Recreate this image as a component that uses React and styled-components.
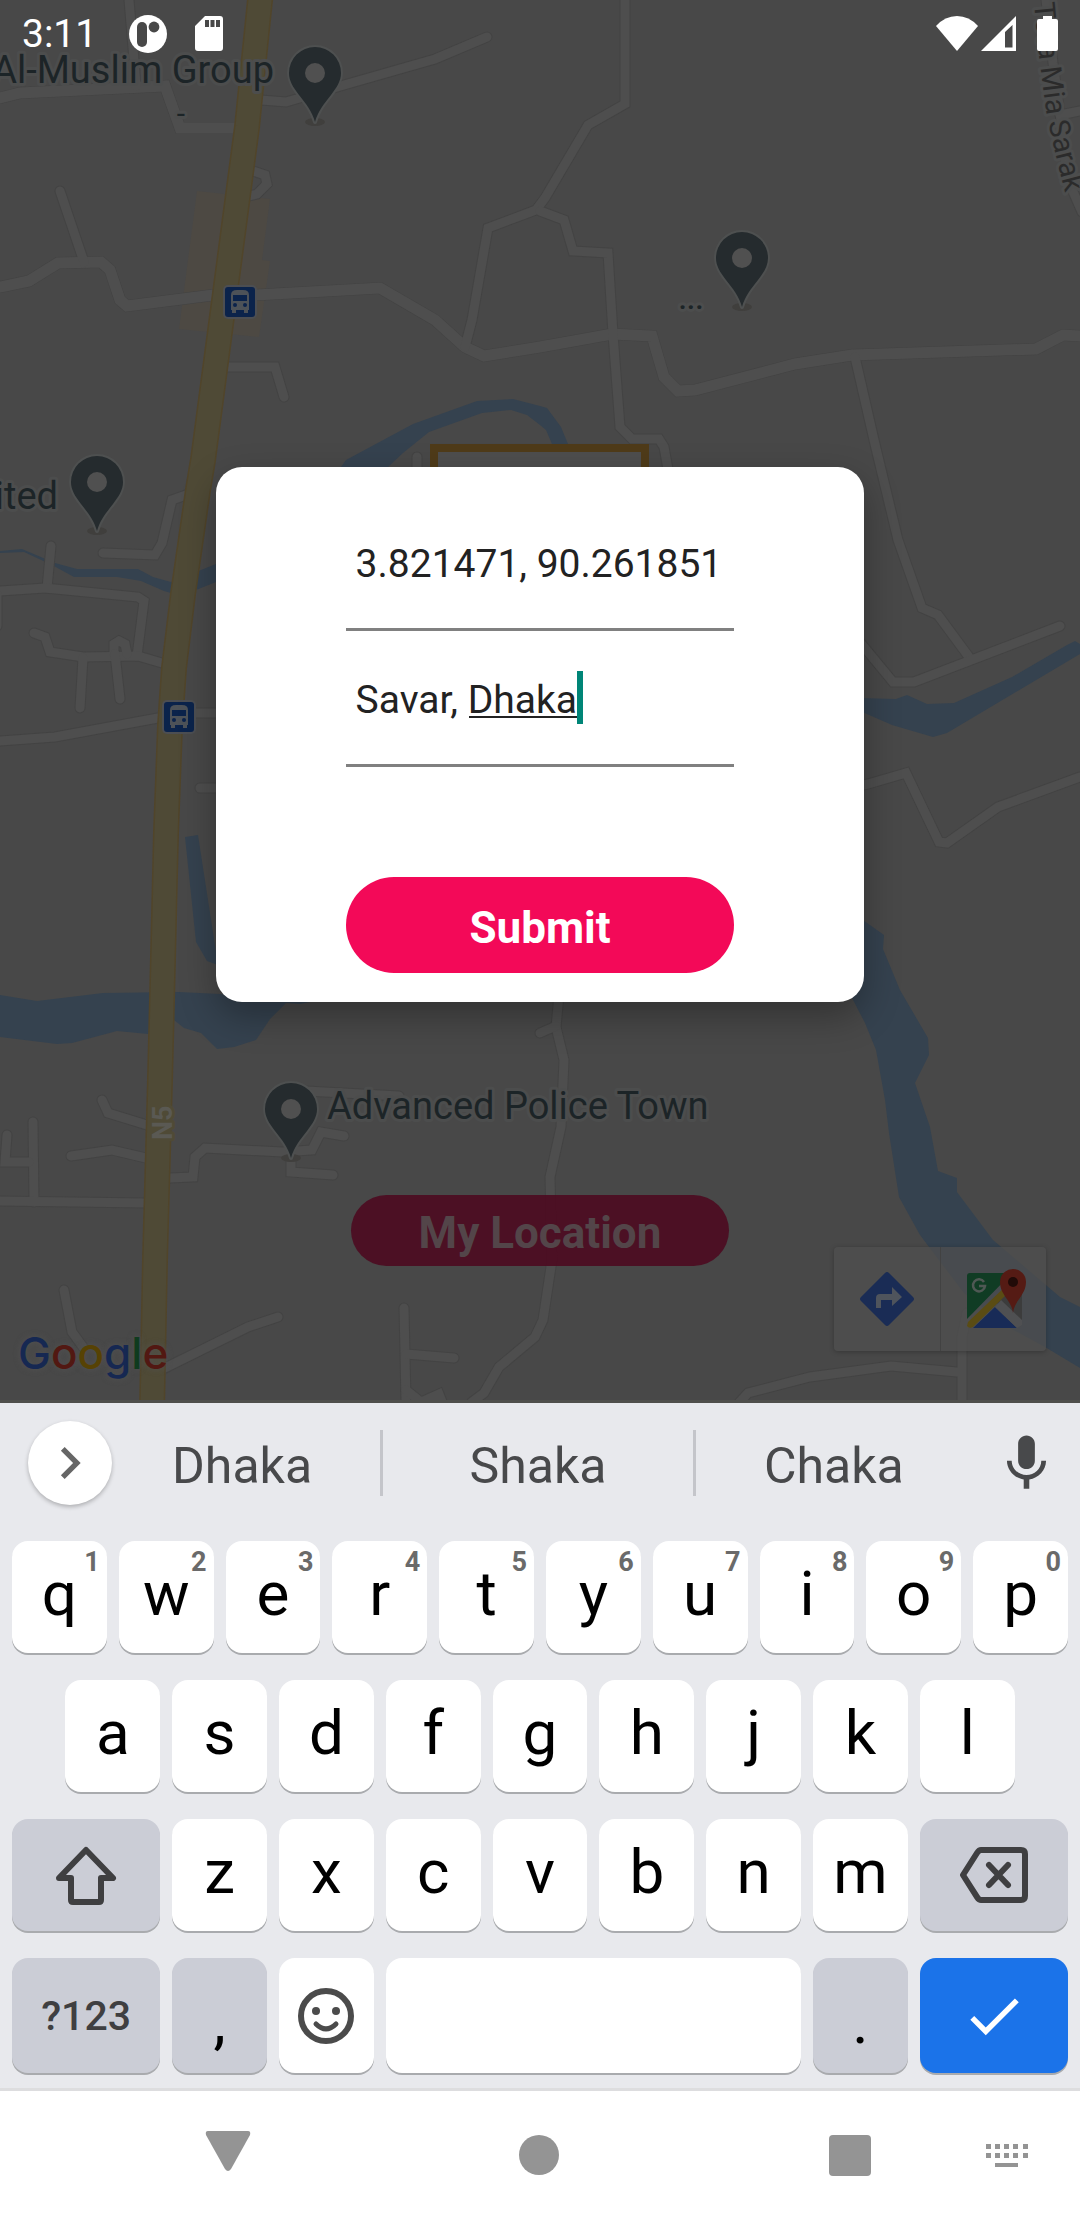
import React, { useId, useState } from "react";
import styled, { createGlobalStyle } from "styled-components";

const Global = createGlobalStyle`
  *, *::before, *::after { box-sizing: border-box; }
  body { margin: 0; background: #fff; font-family: Roboto, "Noto Sans", sans-serif; }
  button, input { font: inherit; color: inherit; border: 0; padding: 0; margin: 0; background: none; }
  button { cursor: pointer; }
  svg { display: block; }
`;

const Screen = styled.div`
  display: flex;
  flex-direction: column;
  min-height: 100vh;
`;

const MapArea = styled.main`
  position: relative;
  flex: 1;
  display: flex;
  flex-direction: column;
  overflow: hidden;
  background: #484848;
  border-bottom: 3px solid #4f4f4c;
`;

const MapCanvas = styled.svg`
  position: absolute;
  top: 0;
  left: 0;
  width: 100%;
  height: 100%;
`;

const StatusBar = styled.header`
  position: relative;
  display: flex;
  align-items: center;
  justify-content: space-between;
  height: 69px;
  padding: 0 22px 2px;
  color: #fff;
`;

const StatusGroup = styled.div`
  display: flex;
  align-items: center;
  gap: ${(p) => p.$gap}px;
`;

const Clock = styled.time`
  font-size: 39px;
  line-height: 44px;
  margin-right: 4px;
`;

const ModalArea = styled.div`
  position: relative;
  flex: 1;
  display: flex;
  align-items: center;
  justify-content: center;
`;

const Modal = styled.form`
  width: 60%;
  padding: 28px 12% 29px;
  border-radius: 26px;
  background: #fff;
  box-shadow: 0 14px 36px rgba(0, 0, 0, 0.3);
  display: flex;
  flex-direction: column;
`;

const Field = styled.label`
  position: relative;
  display: block;
  height: 136px;
  padding-top: 4px;
  border-bottom: 3px solid #808080;
`;

const FieldInput = styled.input`
  width: 100%;
  height: 100%;
  padding-left: 10px;
  font-size: 39px;
  color: #222;
  outline: none;
`;

const ComposingLine = styled.span`
  position: absolute;
  left: 123px;
  bottom: 46px;
  width: 109px;
  height: 2px;
  background: #222;
`;

const Caret = styled.span`
  position: absolute;
  left: 231px;
  bottom: 40px;
  width: 6px;
  height: 53px;
  background: #008577;
`;

const SubmitButton = styled.button`
  height: 96px;
  margin-top: 110px;
  padding-top: 5px;
  border-radius: 48px;
  background: #f30958;
  color: #fff;
  font-size: 44px;
  font-weight: 700;
`;

const LocationButton = styled.button`
  position: absolute;
  left: 50%;
  bottom: 134px;
  width: 35%;
  height: 71px;
  padding-top: 4px;
  transform: translateX(-50%);
  border-radius: 36px;
  background: rgba(76, 14, 34, 0.96);
  color: #534549;
  font-size: 44px;
  line-height: 66px;
  font-weight: 700;
`;

const MapControls = styled.nav`
  position: absolute;
  right: 34px;
  bottom: 49px;
  display: flex;
  border-radius: 4px;
  background: rgba(79, 79, 79, 0.75);
  box-shadow: 0 1px 5px rgba(0, 0, 0, 0.25);
`;

const MapControl = styled.button`
  display: grid;
  place-items: center;
  width: 106px;
  height: 104px;

  & + & {
    border-left: 1px solid #424242;
  }
`;

const Wordmark = styled.div`
  position: absolute;
  left: 18px;
  bottom: 19px;
  font-family: Inter, Roboto, sans-serif;
  font-size: 44px;
  line-height: 56px;
  font-weight: 500;
  text-shadow: 0 0 6px #525252;
`;

const Letter = styled.span`
  color: ${(p) => p.$color};
`;

const Keyboard = styled.section`
  background: #e8e9ed;
  border-bottom: 3px solid #dddddf;
  padding-bottom: 15px;
`;

const Suggestions = styled.div`
  display: grid;
  grid-template-columns: 104px 7fr 8fr 7fr 108px;
  align-items: center;
  height: 120px;
`;

const Expand = styled.button`
  display: grid;
  place-items: center;
  justify-self: end;
  width: 84px;
  height: 84px;
  margin-right: -8px;
  border-radius: 50%;
  background: #fff;
  box-shadow: 0 2px 4px rgba(0, 0, 0, 0.25);
  color: #666;
`;

const Suggestion = styled.button`
  height: 66px;
  padding-top: 5px;
  font-size: 50px;
  line-height: 60px;
  color: #48494b;

  &:nth-child(3) {
    border-left: 3px solid #c4c5ca;
    border-right: 3px solid #c4c5ca;
  }
`;

const Mic = styled.button`
  display: grid;
  place-items: center;
  color: #48494b;
`;

const Keys = styled.div`
  display: grid;
  gap: 27px;
  padding: 18px 12px 0;
`;

const KeyRow = styled.div`
  display: grid;
  grid-template-columns: repeat(20, 1fr);
  column-gap: 12px;
  height: ${(p) => (p.$tall ? 115 : 112)}px;
`;

const keyTones = {
  light: ["#fff", "#000"],
  grey: ["#cbcdd6", "#3f3f41"],
  blue: ["#1b73e9", "#fff"],
};

const Key = styled.button`
  position: relative;
  display: grid;
  place-items: center;
  min-width: 0;
  grid-column: ${(p) => (p.$start ? p.$start + " / " : "")}span ${(p) => p.$span || 2};
  border-radius: 16px;
  background: ${(p) => keyTones[p.$tone || "light"][0]};
  color: ${(p) => keyTones[p.$tone || "light"][1]};
  box-shadow: 0 2px 0 #a9abae;
`;

const Glyph = styled.span`
  font-size: 62px;
  line-height: 72px;
  color: #000;
  padding-bottom: ${(p) => (p.$low ? 0 : 6)}px;
  padding-top: ${(p) => (p.$low ? 12 : 0)}px;
`;

const KeyLabel = styled.span`
  font-size: 41px;
  line-height: 48px;
  font-weight: 500;
`;

const Hint = styled.span`
  position: absolute;
  top: 5px;
  right: 7px;
  font-size: 27px;
  line-height: 32px;
  font-weight: 700;
  color: #6a6a6a;
`;

const NavBar = styled.nav`
  display: grid;
  grid-template-columns: 111px 3fr 5fr 3fr 80px 33px;
  height: 129px;
  background: #fff;
  color: #949494;
`;

const NavButton = styled.button`
  display: grid;
  place-items: center;

  &:first-child {
    grid-column-start: 2;
  }
`;

const waters = [
  "M341 467 346 460 413 424 477 401 513 399 540 406 547 408 561 427 568 444 552 444 546 430 540 425 527 415 511 410 482 413 429 432 403 453 387 468Z",
  "M0 551 22 549 55 563 77 569 138 569 153 577 171 582 216 564 230 560 230 578 216 582 196 590 171 593 164 591 141 581 117 577 74 577 52 565 24 552 0 553Z",
  "M185 837 198 835 218 965 207 961 196 942Z",
  "M0 995 37 1001 103 993 179 992 220 994 310 1002 300 1004 286 1003 270 1019 256 1040 234 1047 217 1049 201 1033 184 1028 174 1020 148 1034 117 1031 72 1043 57 1044 0 1037Z",
  "M860 698 896 699 907 695 927 704 954 703 1012 677 1067 645 1075 641 1080 644 1080 654 947 733 933 737 892 725 860 711Z",
  "M860 918 884 935 883 949 900 990 928 1038 929 1055 915 1083 930 1127 938 1171 957 1178 957 1192 993 1240 1060 1297 1080 1307 1080 1368 1045 1347 1008 1327 964 1293 929 1247 920 1235 899 1197 889 1133 885 1100 876 1050 865 1023 852 998Z",
];

const wideRoads = [
  "M0 98 20 93 165 86 180 128 235 128",
  "M0 287 29 281 58 263 101 262 110 270 120 300 127 306 213 295 256 295 380 288 435 320 465 347 484 356 540 347 612 334 652 336 664 377 678 391 695 390 795 364 852 355 1036 349 1063 335 1080 336",
];

const roads = [
  "M129 0 134 60 136 86",
  "M261 100 286 102 344 85 435 59 487 37",
  "M253 171 265 175 267 184 257 194 249 196",
  "M60 191 84 262",
  "M465 347 472 320 488 228 536 210 545 198 588 125 625 104 625 0",
  "M540 211 564 220 573 251 608 253 613 334 620 427 632 439 659 439 664 447 669 475",
  "M226 367 275 367 284 397",
  "M855 357 874 440 898 540 922 608 938 615 969 657",
  "M855 636 893 682 914 682 1060 626",
  "M858 786 868 784 906 773 939 842 947 843 998 807 1080 777",
  "M1046 0 1053 63 1060 113 1068 180 1082 212",
  "M1060 115 1080 111",
  "M186 495 172 500 162 543 155 555 103 553",
  "M51 546 47 588",
  "M0 591 45 588 138 597 144 601 137 656",
  "M-3 594-3 626",
  "M34 633 45 637 50 652 83 657 138 656 162 663",
  "M83 658 80 708",
  "M114 654 114 644 119 641 125 644 127 654",
  "M115 654 120 699",
  "M0 741 55 737 158 718",
  "M195 713 220 713",
  "M200 788 220 788",
  "M417 457 417 475",
  "M559 995 556 1027 564 1060 561 1127 550 1177 552 1260 543 1320 535 1337 499 1367 484 1393 472 1402",
  "M540 1033 556 1026",
  "M404 1308 406 1402",
  "M406 1354 454 1358",
  "M406 1390 421 1402 439 1394 443 1404",
  "M102 1100 108 1113 147 1125",
  "M71 1156 112 1150 146 1158",
  "M33 1122 34 1202",
  "M7 1135 5 1162 29 1162",
  "M0 1201 145 1203",
  "M170 1178 193 1177 195 1157 205 1148 282 1152 312 1150 321 1132 344 1136",
  "M291 1158 291 1172 333 1175",
  "M306 1091 399 1096",
  "M64 1290 72 1332 83 1347",
  "M278 1317 248 1327 165 1368",
  "M738 1404 748 1393 810 1377 891 1366 957 1372",
  "M967 1313 962 1337 962 1404",
];

const highway =
  "M261-6 260 0 247 127 203 460 198 490 183 594 174 668 170 726 166 833 162 1000 160 1080 155 1260 152 1410";

const pins = [
  [315, 73],
  [742, 258],
  [97, 482],
  [291, 1109],
];

function MapPin({ x, y }) {
  return (
    <g transform={`translate(${x} ${y})`}>
      <ellipse cx="0" cy="49" rx="10" ry="4" fill="#403f3d" />
      <path
        d="M0 49C-3 38-9 31-16 22-22 14-26 8-26 0A26 26 0 0 1 26 0C26 8 22 14 16 22 9 31 3 38 0 49Z"
        fill="#252b2e"
        stroke="#4e5050"
        strokeWidth="4"
        strokeLinejoin="round"
        paintOrder="stroke"
      />
      <circle r="10" fill="#505050" />
    </g>
  );
}

function BusStop({ x, y }) {
  return (
    <g transform={`translate(${x} ${y})`}>
      <rect x="-17" y="-17" width="34" height="34" rx="5" fill="#4c4e52" />
      <rect x="-15" y="-15" width="30" height="30" rx="3" fill="#0b234b" />
      <path
        d="M-9-7Q-9-12-3-12H3Q9-12 9-7V8H8V11H4V8H-4V11H-8V8H-9Z"
        fill="#4d5258"
      />
      <rect x="-7" y="-7" width="14" height="6" fill="#0b234b" />
      <circle cx="-5" cy="3" r="2" fill="#0b234b" />
      <circle cx="5" cy="3" r="2" fill="#0b234b" />
    </g>
  );
}

const Label = styled.text`
  font-size: ${(p) => p.$size || 38}px;
  font-weight: ${(p) => p.$weight || 400};
  fill: ${(p) => p.$fill || "#1c2427"};
  stroke: ${(p) => p.$halo || "#4c4d4d"};
  stroke-width: 6px;
  stroke-linejoin: round;
  paint-order: stroke;
`;

function MapDrawing() {
  return (
    <MapCanvas viewBox="0 0 1080 1400" preserveAspectRatio="xMidYMid slice" role="img" aria-label="Map of Savar">
      {waters.map((d) => (
        <path key={d} d={d} fill="#35424f" />
      ))}
      <path d="M197 191 270 199 262 260 270 261 259 337 179 329Z" fill="#4d4943" />
      <g fill="none" strokeLinecap="round" strokeLinejoin="miter">
        {wideRoads.map((d) => (
          <path key={d} d={d} stroke="#434343" strokeWidth="12" />
        ))}
        {roads.map((d) => (
          <path key={d} d={d} stroke="#434343" strokeWidth="11" />
        ))}
        {wideRoads.map((d) => (
          <path key={d} d={d} stroke="#4e4e4e" strokeWidth="11" />
        ))}
        {roads.map((d) => (
          <path key={d} d={d} stroke="#4e4e4e" strokeWidth="9" />
        ))}
        <path d={highway} stroke="#51452a" strokeWidth="26" />
        <path d={highway} stroke="#4f4a36" strokeWidth="23" />
      </g>
      <rect x="434" y="448" width="211" height="60" fill="#4e4e4e" stroke="#4f3b19" strokeWidth="8" />
      {pins.map(([x, y]) => (
        <MapPin key={x} x={x} y={y} />
      ))}
      <BusStop x={240} y={302} />
      <BusStop x={179} y={717} />
      <Label x="274" y="83" textAnchor="end">Al-Muslim Group</Label>
      <Label x="181" y="124" textAnchor="middle" $size={30}>-</Label>
      <Label x="691" y="309" textAnchor="middle" $size={30} $weight={500}>...</Label>
      <Label x="58" y="509" textAnchor="end">ited</Label>
      <Label x="327" y="1119">Advanced Police Town</Label>
      <Label transform="translate(172 1140) rotate(-90)" $size={27} $weight={700} $fill="#5a5953" $halo="#4f4a36">
        N5
      </Label>
      <path id="sarak" d="M1034 3 1039 55 1046 110Q1051 138 1066 196" fill="none" />
      <Label $size={29} $fill="#2b2b2b">
        <textPath href="#sarak">Tota Mia Sarak</textPath>
      </Label>
    </MapCanvas>
  );
}

function StatusIcons() {
  return (
    <>
      <StatusGroup $gap={28}>
        <Clock>3:11</Clock>
        <svg width="38" height="38" viewBox="0 0 38 38" aria-hidden="true">
          <circle cx="19" cy="19" r="19" fill="#fff" />
          <rect x="8" y="7" width="10" height="25" rx="5" fill="#484848" />
          <circle cx="25" cy="12" r="5.4" fill="#484848" />
        </svg>
        <svg width="28" height="35" viewBox="0 0 28 35" aria-hidden="true">
          <path
            d="M10 0H25Q28 0 28 3V32Q28 35 25 35H3Q0 35 0 32V10ZM10 4V11H14V4ZM15.5 4V11H19.500V4ZM21 4V11H25V4Z"
            fill="#fff"
            fillRule="evenodd"
          />
        </svg>
      </StatusGroup>
      <StatusGroup $gap={3}>
        <svg width="42" height="35" viewBox="0 0 42 35" aria-hidden="true">
          <path d="M0 10Q9 0 21 0 33 0 42 10L21 35Z" fill="#fff" />
        </svg>
        <svg width="53" height="35" viewBox="0 0 53 35" aria-hidden="true">
          <path d="M35 0V35H0ZM31.500 9 24 16V31.500H31.500Z" fill="#fff" fillRule="evenodd" />
        </svg>
        <svg width="21" height="35" viewBox="0 0 21 35" aria-hidden="true">
          <path d="M6 0H15V3H19Q21 3 21 5V33Q21 35 19 35H2Q0 35 0 33V5Q0 3 2 3H6Z" fill="#fff" />
        </svg>
      </StatusGroup>
    </>
  );
}

function DirectionsIcon() {
  return (
    <svg width="56" height="56" viewBox="0 0 56 56" aria-hidden="true">
      <path d="M26 2Q28 0 30 2L54 26Q56 28 54 30L30 54Q28 56 26 54L2 30Q0 28 2 26Z" fill="#1a2c55" />
      <path d="M17 37V27Q17 23 21 23H33V16L43 26 33 35V29H22V37Z" fill="#4f545c" />
    </svg>
  );
}

function MapsIcon() {
  return (
    <svg width="66" height="60" viewBox="-6 0 66 60" aria-hidden="true">
      <path d="M0 7Q0 4 3 4H45L0 50Z" fill="#103c24" />
      <path d="M40 20 55 12V54L30 34Z" fill="#3c3c3c" />
      <path d="M28 38 50 59H6Z" fill="#182b57" />
      <path d="M28 38 34 31 55 51V56L50 59Z" fill="#4f5052" />
      <path d="M1 53 40 16V25L6 58Q2 60 0 57Z" fill="#5a4c14" />
      <path d="M17 13A6 6 0 1 0 18 17H12" fill="none" stroke="#4f5854" strokeWidth="2.5" />
      <path d="M46 44C45 32 33 26 33 13A13 13 0 0 1 59 13C59 26 47 32 46 44Z" fill="#551b14" />
      <circle cx="46" cy="13" r="5" fill="#210b08" />
    </svg>
  );
}

const wordmark = [
  ["G", "#162852"],
  ["o", "#521812"],
  ["o", "#574204"],
  ["g", "#162852"],
  ["l", "#0f3b1e"],
  ["e", "#521812"],
];

const ShiftIcon = () => (
  <svg width="64" height="62" viewBox="0 0 64 62" fill="none" stroke="#3f3f41" strokeWidth="6" strokeLinejoin="round" aria-hidden="true">
    <path d="M32 6 59 34H47V56Q47 58 45 58H19Q17 58 17 56V34H5Z" />
  </svg>
);

const BackspaceIcon = () => (
  <svg width="70" height="56" viewBox="0 0 70 56" fill="none" stroke="#3f3f41" strokeWidth="6" strokeLinejoin="round" strokeLinecap="round" aria-hidden="true">
    <path d="M4 28 18 6Q20 3 22 3H62Q66 3 66 7V49Q66 53 62 53H22Q20 53 18 50Z" />
    <path d="M30 18 49 38M49 18 30 38" />
  </svg>
);

const SmileIcon = () => (
  <svg width="58" height="58" viewBox="0 0 58 58" fill="none" stroke="#4b4b4b" strokeWidth="6" aria-hidden="true">
    <circle cx="29" cy="29" r="25" />
    <path d="M19 37Q29 47 39 37" strokeWidth="5" strokeLinecap="round" />
    <circle cx="19" cy="24" r="4" fill="#4b4b4b" stroke="none" />
    <circle cx="39" cy="24" r="4" fill="#4b4b4b" stroke="none" />
  </svg>
);

const CheckIcon = () => (
  <svg width="66" height="66" viewBox="0 0 24 24" fill="currentColor" aria-hidden="true">
    <path d="M9 16.200 4.800 12 3.400 13.400 9 19 21 7 19.600 5.600Z" />
  </svg>
);

const topRow = "qwertyuiop".split("");
const middleRow = "asdfghjkl".split("");
const bottomRow = "zxcvbnm".split("");

export default function App() {
  const ids = useId();
  const [coords, setCoords] = useState("3.821471, 90.261851");
  const [place, setPlace] = useState("Savar, Dhaka");

  return (
    <Screen>
      <Global />
      <MapArea>
        <MapDrawing />
        <Wordmark>
          {wordmark.map(([letter, color], i) => (
            <Letter key={i} $color={color}>{letter}</Letter>
          ))}
        </Wordmark>
        <MapControls aria-label="Map actions">
          <MapControl type="button" aria-label="Directions"><DirectionsIcon /></MapControl>
          <MapControl type="button" aria-label="Open in Maps"><MapsIcon /></MapControl>
        </MapControls>
        <LocationButton type="button">My Location</LocationButton>
        <StatusBar>
          <StatusIcons />
        </StatusBar>
        <ModalArea>
          <Modal onSubmit={(e) => e.preventDefault()}>
            <Field htmlFor={ids + "coords"}>
              <FieldInput id={ids + "coords"} aria-label="Coordinates" value={coords} onChange={(e) => setCoords(e.target.value)} />
            </Field>
            <Field htmlFor={ids + "place"}>
              <FieldInput id={ids + "place"} aria-label="Place" value={place} onChange={(e) => setPlace(e.target.value)} />
              <ComposingLine />
              <Caret />
            </Field>
            <SubmitButton type="submit">Submit</SubmitButton>
          </Modal>
        </ModalArea>
      </MapArea>

      <Keyboard aria-label="Keyboard">
        <Suggestions>
          <Expand type="button" aria-label="More">
            <svg width="64" height="64" viewBox="0 0 24 24" fill="currentColor" aria-hidden="true">
              <path d="M10 6 8.590 7.410 13.170 12 8.590 16.590 10 18 16 12Z" />
            </svg>
          </Expand>
          <Suggestion type="button">Dhaka</Suggestion>
          <Suggestion type="button">Shaka</Suggestion>
          <Suggestion type="button">Chaka</Suggestion>
          <Mic type="button" aria-label="Voice input">
            <svg width="67" height="67" viewBox="0 0 24 24" fill="currentColor" aria-hidden="true">
              <path d="M12 14c1.66 0 2.99-1.34 2.99-3L15 5c0-1.66-1.34-3-3-3S9 3.34 9 5v6c0 1.66 1.34 3 3 3zm5.3-3c0 3-2.54 5.1-5.3 5.1S6.7 14 6.7 11H5c0 3.41 2.72 6.23 6 6.72V21h2v-3.28c3.28-.48 6-3.3 6-6.72h-1.700z" />
            </svg>
          </Mic>
        </Suggestions>
        <Keys>
          <KeyRow>
            {topRow.map((k, i) => (
              <Key type="button" key={k}>
                <Glyph>{k}</Glyph>
                <Hint>{(i + 1) % 10}</Hint>
              </Key>
            ))}
          </KeyRow>
          <KeyRow>
            {middleRow.map((k, i) => (
              <Key type="button" key={k} $start={i === 0 ? 2 : undefined}>
                <Glyph>{k}</Glyph>
              </Key>
            ))}
          </KeyRow>
          <KeyRow>
            <Key type="button" $span={3} $tone="grey" aria-label="Shift"><ShiftIcon /></Key>
            {bottomRow.map((k) => (
              <Key type="button" key={k}>
                <Glyph>{k}</Glyph>
              </Key>
            ))}
            <Key type="button" $span={3} $tone="grey" aria-label="Backspace"><BackspaceIcon /></Key>
          </KeyRow>
          <KeyRow $tall>
            <Key type="button" $span={3} $tone="grey"><KeyLabel>?123</KeyLabel></Key>
            <Key type="button" $tone="grey"><Glyph $low>,</Glyph></Key>
            <Key type="button" aria-label="Emoji"><SmileIcon /></Key>
            <Key type="button" $span={8} aria-label="Space" />
            <Key type="button" $tone="grey"><Glyph $low>.</Glyph></Key>
            <Key type="button" $span={3} $tone="blue" aria-label="Done"><CheckIcon /></Key>
          </KeyRow>
        </Keys>
      </Keyboard>

      <NavBar aria-label="System">
        <NavButton type="button" aria-label="Back">
          <svg width="46" height="50" viewBox="0 0 46 50" fill="currentColor" aria-hidden="true">
            <path d="M3 0H43Q46 0 45 4L26 38Q23 42 20 38L1 4Q0 0 3 0Z" />
          </svg>
        </NavButton>
        <NavButton type="button" aria-label="Home">
          <svg width="42" height="42" viewBox="0 0 42 42" fill="currentColor" aria-hidden="true">
            <circle cx="21" cy="20" r="20" />
          </svg>
        </NavButton>
        <NavButton type="button" aria-label="Recents">
          <svg width="42" height="42" viewBox="0 0 42 42" fill="currentColor" aria-hidden="true">
            <rect width="42" height="41" rx="4" />
          </svg>
        </NavButton>
        <NavButton type="button" aria-label="Switch keyboard">
          <svg width="42" height="24" viewBox="0 0 42 24" fill="currentColor" aria-hidden="true">
            {[0, 9, 18, 27, 37].map((x) => (
              <g key={x}>
                <rect x={x} y="0" width="5" height="5" />
                <rect x={x} y="9" width="5" height="5" />
              </g>
            ))}
            <rect x="9" y="19" width="23" height="4" />
          </svg>
        </NavButton>
      </NavBar>
    </Screen>
  );
}
